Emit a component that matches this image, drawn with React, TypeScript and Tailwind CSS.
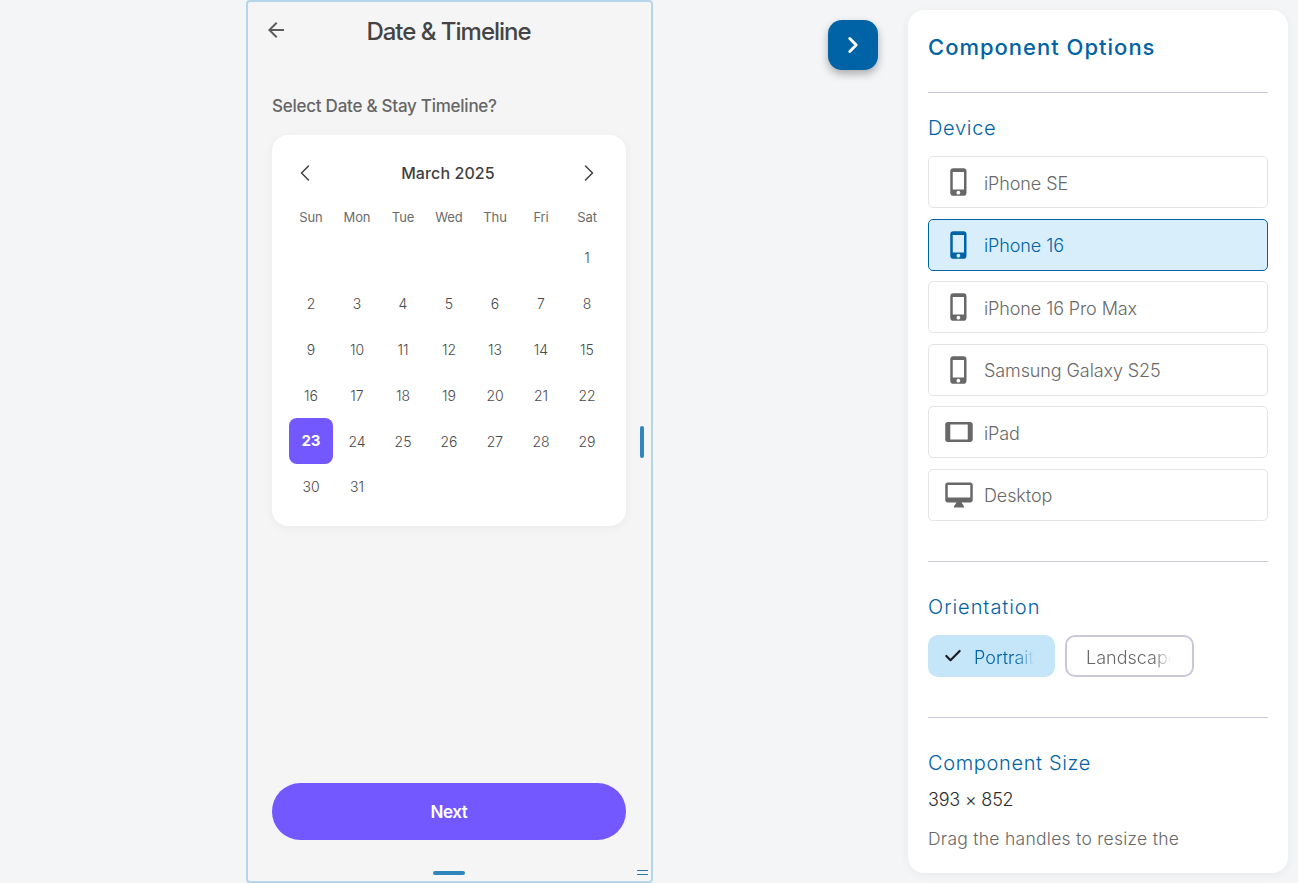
import { MdArrowBack, MdPhoneIphone, MdTablet } from 'react-icons/md'
import { Check, ChevronLeft, ChevronRight } from 'lucide-react'

const font = { fontFamily: 'Inter, "Noto Sans", sans-serif' }

const weekDays = ['Sun', 'Mon', 'Tue', 'Wed', 'Thu', 'Fri', 'Sat']

function DesktopIcon({ size }: { size: number }) {
  return (
    <svg width={size} height={size} viewBox="0 0 24 24" fill="currentColor">
      <path d="M21 2H3c-1.1 0-2 .9-2 2v12c0 1.1.9 2 2 2h7l-2 3v1h8v-1l-2-3h7c1.1 0 2-.9 2-2V4c0-1.1-.9-2-2-2zm0 12H3V4h18v10z" />
    </svg>
  )
}

const devices = [
  { name: 'iPhone SE', icon: MdPhoneIphone },
  { name: 'iPhone 16', icon: MdPhoneIphone, active: true },
  { name: 'iPhone 16 Pro Max', icon: MdPhoneIphone },
  { name: 'Samsung Galaxy S25', icon: MdPhoneIphone },
  { name: 'iPad', icon: MdTablet },
  { name: 'Desktop', icon: DesktopIcon },
]

function Calendar() {
  const blanks = Array.from({ length: 6 })
  const days = Array.from({ length: 31 }, (_, i) => i + 1)
  return (
    <div className="mt-[17px] w-[354px] h-[391px] rounded-2xl bg-white px-[16px] pt-[23px] shadow-[0_2px_10px_rgba(0,0,0,0.05)]">
      <div className="flex h-[30px] items-center justify-between text-[#444]">
        <ChevronLeft size={28} strokeWidth={1.3} className="ml-[3px]" />
        <span className="ml-[2px] text-[16px] font-medium tracking-[0.1px] text-[#3f3f3f]">March 2025</span>
        <ChevronRight size={28} strokeWidth={1.3} className="mr-[7px]" />
      </div>
      <div className="mt-[19px] grid grid-cols-[repeat(7,46px)] text-center text-[13px] text-[#6b6b6b]">
        {weekDays.map((d) => (
          <span key={d} className="leading-[20px] tracking-[-0.1px]">{d}</span>
        ))}
      </div>
      <div className="mt-[8px] grid grid-cols-[repeat(7,46px)] auto-rows-[45.8px] text-center text-[14px] font-light text-[#4a4a4a]">
        {blanks.map((_, i) => (
          <span key={i} />
        ))}
        {days.map((d) =>
          d === 23 ? (
            <span key={d} className="ml-[1px] flex w-[44px] items-center justify-center rounded-lg bg-[#7357ff] text-[15px] font-bold text-white">
              {d}
            </span>
          ) : (
            <span key={d} className="flex items-center justify-center">
              {d}
            </span>
          ),
        )}
      </div>
    </div>
  )
}

function Phone() {
  return (
    <div className="relative flex h-[883px] w-[407px] shrink-0 flex-col rounded-[4px] border-2 border-[#b5d6ea] bg-[#f5f5f5] px-[24px]">
      <div className="relative flex h-[60px] items-center justify-center">
        <MdArrowBack size={24} className="absolute left-[-8px] top-[16px] text-[#5c5c5c]" />
        <h1 className="mr-[2px] text-[24px] font-medium tracking-[-1px] text-[#444]">Date &amp; Timeline</h1>
      </div>
      <p className="mt-[32px] text-[17px] font-medium leading-[24px] tracking-[-0.25px] text-[#666]">Select Date &amp; Stay Timeline?</p>
      <Calendar />
      <button className="mt-auto mb-[41px] h-[57px] w-[354px] rounded-full bg-[#7357ff] pt-[2px] text-[17px] font-semibold tracking-[-0.4px] text-white">
        Next
      </button>
      {/* resize handles */}
      <span className="absolute right-[7px] top-[424px] h-[32px] w-[4px] rounded-full bg-[#2f86bd]" />
      <span className="absolute bottom-[6px] left-[185px] h-[4px] w-[32px] rounded-full bg-[#2f86bd]" />
      <span className="absolute bottom-[6px] right-[3px] h-[5px] w-[11px] border-y border-[#2878ad]" />
    </div>
  )
}

function Options() {
  return (
    <aside className="my-[10px] flex h-[863px] w-[380px] shrink-0 flex-col overflow-hidden rounded-2xl bg-white px-5 shadow-[0_2px_10px_rgba(0,0,0,0.05)]">
      <h2 className="mt-[22px] text-[22px] font-medium leading-[30px] tracking-[1px] text-[#0063a6]">Component Options</h2>
      <hr className="mt-[30px] border-[#c9c8d8]" />
      <h3 className="mt-[22px] text-[20px] font-light leading-[26px] tracking-[0.7px] text-[#0063a6]">Device</h3>
      <div className="mt-[15px] flex flex-col gap-[10.5px]">
        {devices.map((d) => {
          const Icon = d.icon
          return (
            <div
              key={d.name}
              className={
                d.active
                  ? 'flex h-[52px] items-center gap-[10px] rounded-[5px] border border-[#0063a6] bg-[#d8eefb] pl-[15px] text-[#0063a6]'
                  : 'flex h-[52px] items-center gap-[10px] rounded-[5px] border-[1.5px] border-[#e4e4e7] pl-[15px] text-[#686868]'
              }
            >
              <Icon size={30} />
              <span className="pt-[2px] text-[18px] font-light tracking-[-0.1px]">{d.name}</span>
            </div>
          )
        })}
      </div>
      <hr className="mt-[40px] border-[#c9c8d8]" />
      <h3 className="mt-[32px] text-[20px] font-light leading-[26px] tracking-[0.95px] text-[#0063a6]">Orientation</h3>
      <div className="mt-[15px] flex gap-[10px]">
        <div className="flex h-[42px] w-[127px] items-center rounded-[10px] bg-[#c5e5f9] pl-[15px]">
          <Check size={20} strokeWidth={2.6} className="text-[#1d1b20]" />
          <span className="ml-[11px] w-[60px] overflow-hidden whitespace-nowrap pt-[3px] text-[18px] font-light text-[#0063a6] [mask-image:linear-gradient(to_right,black_70%,transparent)]">
            Portrait
          </span>
        </div>
        <div className="flex h-[42px] w-[129px] items-center rounded-[10px] border-2 border-[#c9c8d8] pl-[19px]">
          <span className="w-[85px] overflow-hidden whitespace-nowrap pt-[3px] text-[18px] font-light text-[#686868] [mask-image:linear-gradient(to_right,black_80%,transparent)]">
            Landscape
          </span>
        </div>
      </div>
      <hr className="mt-[40px] border-[#c9c8d8]" />
      <h3 className="mt-[32px] text-[20px] font-light leading-[26px] tracking-[0.65px] text-[#0063a6]">Component Size</h3>
      <p className="mt-[12px] text-[18px] font-light leading-[24px] tracking-[-0.2px] text-[#2c2c2c]">393 × 852</p>
      <p className="mt-[15px] text-[17.5px] font-light leading-[24px] tracking-[0.27px] text-[#686868]">Drag the handles to resize the</p>
    </aside>
  )
}

export default function App() {
  return (
    <div style={font} className="flex h-[883px] w-[1298px] overflow-hidden bg-[#f4f5f7] pl-[246px]">
      <Phone />
      <button className="ml-[175px] mt-[20px] flex h-[50px] w-[50px] shrink-0 items-center justify-center rounded-[14px] bg-[#0063a6] text-white shadow-[0_4px_8px_rgba(0,0,0,0.3)]">
        <ChevronRight size={26} strokeWidth={2.6} />
      </button>
      <div className="ml-[30px]">
        <Options />
      </div>
    </div>
  )
}
